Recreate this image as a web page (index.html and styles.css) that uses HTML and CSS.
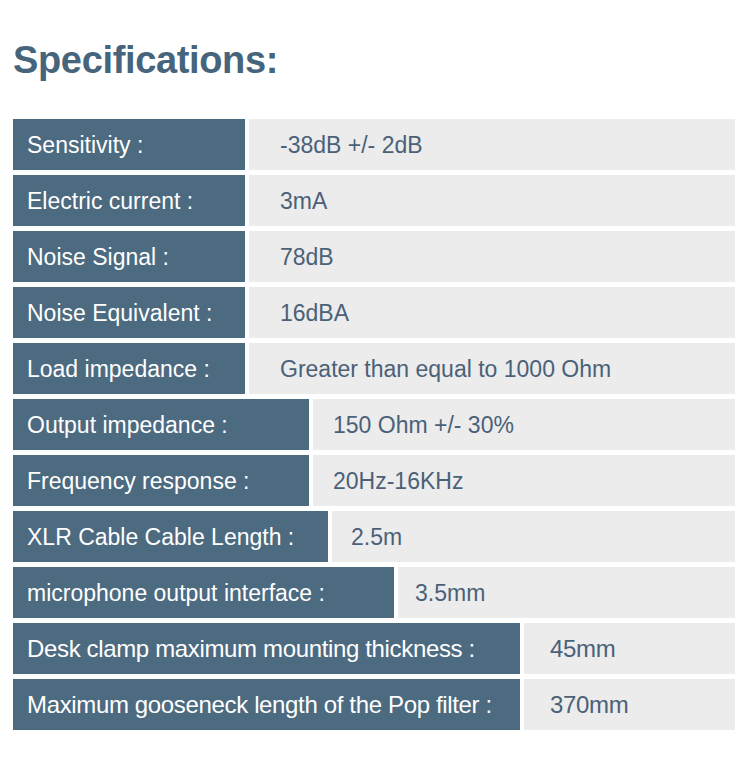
FILE: index.html
```html
<!DOCTYPE html>
<html>
<head>
<meta charset="utf-8">
<link rel="stylesheet" href="styles.css">
</head>
<body>
<div class="page">
  <h1 class="title">Specifications:</h1>
  <div class="table">
    <div class="row w1"><div class="label">Sensitivity :</div><div class="value">-38dB +/- 2dB</div></div>
    <div class="row w1"><div class="label">Electric current :</div><div class="value">3mA</div></div>
    <div class="row w1"><div class="label">Noise Signal :</div><div class="value">78dB</div></div>
    <div class="row w1"><div class="label">Noise Equivalent :</div><div class="value">16dBA</div></div>
    <div class="row w1"><div class="label">Load impedance :</div><div class="value">Greater than equal to 1000 Ohm</div></div>
    <div class="row w2"><div class="label">Output impedance :</div><div class="value">150 Ohm +/- 30%</div></div>
    <div class="row w2"><div class="label">Frequency response :</div><div class="value">20Hz-16KHz</div></div>
    <div class="row w3"><div class="label">XLR Cable Cable Length :</div><div class="value">2.5m</div></div>
    <div class="row w4"><div class="label">microphone output interface :</div><div class="value">3.5mm</div></div>
    <div class="row w5 narrow"><div class="label">Desk clamp maximum mounting thickness :</div><div class="value">45mm</div></div>
    <div class="row w5 narrow"><div class="label">Maximum gooseneck length of the Pop filter :</div><div class="value">370mm</div></div>
  </div>
</div>
</body>
</html>
```
FILE: styles.css
```css
html, body {
  margin: 0;
  padding: 0;
  background: #ffffff;
}
.page {
  width: 750px;
  height: 779px;
  padding: 0 15px 0 13px;
  box-sizing: border-box;
  font-family: "Liberation Sans", Arial, sans-serif;
}
.title {
  margin: 0;
  padding-top: 38px;
  height: 119px;
  box-sizing: border-box;
  font-size: 38px;
  line-height: 44px;
  font-weight: 700;
  color: #46647b;
  letter-spacing: -0.35px;
}
.table {
  display: flex;
  flex-direction: column;
  gap: 5px;
}
.row {
  display: grid;
  column-gap: 4px;
  height: 51px;
}
.label {
  background: #4c6a80;
  color: #ffffff;
  font-size: 23px;
  display: flex;
  align-items: center;
  padding: 2px 0 0 14px;
  white-space: nowrap;
}
.value {
  background: #ececec;
  color: #4a6178;
  font-size: 23px;
  display: flex;
  align-items: center;
  padding-top: 2px;
  white-space: nowrap;
}
.w1 { grid-template-columns: 232px 1fr; }
.w1 .value { padding-left: 31px; }
.w2 { grid-template-columns: 296px 1fr; }
.w2 .value { padding-left: 20px; }
.w3 { grid-template-columns: 315px 1fr; }
.w3 .value { padding-left: 19px; }
.w4 { grid-template-columns: 381px 1fr; }
.w4 .value { padding-left: 17px; }
.w5 { grid-template-columns: 507px 1fr; }
.w5 .value { padding-left: 26px; }
.narrow .label, .narrow .value {
  font-size: 24px;
  letter-spacing: -0.35px;
  padding-top: 0;
}
```
